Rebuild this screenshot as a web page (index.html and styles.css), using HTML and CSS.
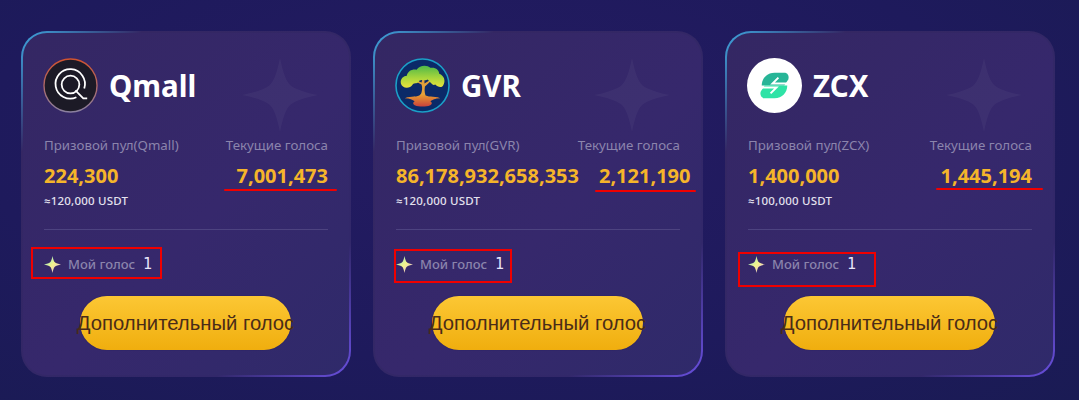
FILE: index.html
```html
<!DOCTYPE html>
<html lang="en">
<head>
  <meta charset="UTF-8">
  <meta name="viewport" content="width=device-width, initial-scale=1.0">
  <title>Голосование</title>
  <link rel="stylesheet" href="styles.css">
</head>
<body>
  <svg class="svg-defs" width="0" height="0">
    <defs>
      <linearGradient id="sparkGrad" x1="0" y1="0" x2="1" y2="1">
        <stop offset="0.1" stop-color="#8fe8d0"/>
        <stop offset="0.5" stop-color="#f4f48a"/>
        <stop offset="0.9" stop-color="#e8b8e0"/>
      </linearGradient>
      <linearGradient id="qRing" x1="0.5" y1="0" x2="0.5" y2="1">
        <stop offset="0" stop-color="#d2532f"/>
        <stop offset="1" stop-color="#8a80a0"/>
      </linearGradient>
      <linearGradient id="treeGrad" x1="0" y1="0" x2="0" y2="1">
        <stop offset="0" stop-color="#4fb848"/>
        <stop offset="0.55" stop-color="#a8d63c"/>
        <stop offset="1" stop-color="#ece23c"/>
      </linearGradient>
      <linearGradient id="rootGrad" x1="0" y1="0" x2="0" y2="1">
        <stop offset="0" stop-color="#e8a030"/>
        <stop offset="1" stop-color="#c8403c"/>
      </linearGradient>
      <path id="star4" d="M50 0 C54 20 58 32 64 37 C70 42 84 47 100 50 C84 53 70 58 64 63 C58 68 54 80 50 100 C46 80 42 68 36 63 C30 58 16 53 0 50 C16 47 30 42 36 37 C42 32 46 20 50 0 Z"/>
    </defs>
  </svg>

  <div class="cards">
    <div class="card card-qmall">
      <svg class="bg-star" viewBox="0 0 100 100" preserveAspectRatio="none"><use href="#star4"/></svg>
      <div class="card-head">
        <svg class="logo" viewBox="0 0 56 56">
          <circle cx="28" cy="28" r="27" fill="#1c1a26" stroke="url(#qRing)" stroke-width="1.4"/>
          <path d="M34 40 A15 15 0 1 1 42 31" fill="none" stroke="#fff" stroke-width="1.8"/>
          <circle cx="28" cy="27" r="9" fill="none" stroke="#fff" stroke-width="1.8"/>
          <path d="M33 33 L41 41 H45" fill="none" stroke="#fff" stroke-width="1.8"/>
        </svg>
        <span class="card-title">Qmall</span>
      </div>
      <div class="row labels"><span>Призовой пул(Qmall)</span><span>Текущие голоса</span></div>
      <div class="row values"><span>224,300</span><span>7,001,473</span></div>
      <div class="usdt">≈120,000 USDT</div>
      <div class="divider"></div>
      <div class="my-vote">
        <svg class="spark" viewBox="0 0 100 100"><use href="#star4" fill="url(#sparkGrad)"/></svg>
        <span class="my-vote-label">Мой голос</span>
        <span class="my-vote-num">1</span>
      </div>
      <button class="vote-btn" type="button"><span>Дополнительный голос</span></button>
      <div class="mark-box"></div>
      <div class="mark-line"></div>
    </div>

    <div class="card card-gvr">
      <svg class="bg-star" viewBox="0 0 100 100" preserveAspectRatio="none"><use href="#star4"/></svg>
      <div class="card-head">
        <svg class="logo" viewBox="0 0 56 56">
          <circle cx="28" cy="28" r="27" fill="#0b2a68" stroke="#1ba0c8" stroke-width="1.6"/>
          <path d="M10 41 C17 38 23 41 26 37 L30 37 C33 41 39 38 46 41 C41 41 38 43 36 44 C38 45 38 47 36 48 C31 50 25 50 20 48 C18 47 18 45 20 44 C18 43 15 41 10 41 Z" fill="url(#rootGrad)"/>
          <path d="M26 38 C28 33 28 30 27 27 L21 24 L22 23 L27 25 L28 21 L30 21 L30 26 L35 23 L36 24 L30.5 29 C30 32 30 34 31 38 Z" fill="#e2a03a"/>
          <g fill="url(#treeGrad)">
            <path d="M6 26 C5 21 9 18 12 18 C13 13 18 11 22 12 C25 7 33 7 36 10 C41 9 45 12 45 16 C50 18 52 23 49 28 C47 31 43 29 41 27 C38 29 36 24 33 22 C31 24 28 21 25 23 C23 27 20 25 18 27 C15 32 7 31 6 26 Z"/>
          </g>
        </svg>
        <span class="card-title">GVR</span>
      </div>
      <div class="row labels"><span>Призовой пул(GVR)</span><span>Текущие голоса</span></div>
      <div class="row values"><span>86,178,932,658,353</span><span>2,121,190</span></div>
      <div class="usdt">≈120,000 USDT</div>
      <div class="divider"></div>
      <div class="my-vote">
        <svg class="spark" viewBox="0 0 100 100"><use href="#star4" fill="url(#sparkGrad)"/></svg>
        <span class="my-vote-label">Мой голос</span>
        <span class="my-vote-num">1</span>
      </div>
      <button class="vote-btn" type="button"><span>Дополнительный голос</span></button>
      <div class="mark-box"></div>
      <div class="mark-line"></div>
    </div>

    <div class="card card-zcx">
      <svg class="bg-star" viewBox="0 0 100 100" preserveAspectRatio="none"><use href="#star4"/></svg>
      <div class="card-head">
        <svg class="logo" viewBox="0 0 56 56">
          <circle cx="28" cy="28" r="28" fill="#fff"/>
          <path d="M28 15 H38 C42 15 43 19 42 22 L38 28 H15 C15 21 20 15 28 15 Z" fill="#27b597"/>
          <path d="M14 28 H41 C41 35 36 41 28 41 H18 C14 41 13 37 14 34 L18 28 Z" fill="#2fe3a6"/>
          <path d="M42 26 H26 L32 20" fill="none" stroke="#fff" stroke-width="2"/>
          <path d="M14 30 H30 L24 36" fill="none" stroke="#fff" stroke-width="2"/>
        </svg>
        <span class="card-title">ZCX</span>
      </div>
      <div class="row labels"><span>Призовой пул(ZCX)</span><span>Текущие голоса</span></div>
      <div class="row values"><span>1,400,000</span><span>1,445,194</span></div>
      <div class="usdt">≈100,000 USDT</div>
      <div class="divider"></div>
      <div class="my-vote">
        <svg class="spark" viewBox="0 0 100 100"><use href="#star4" fill="url(#sparkGrad)"/></svg>
        <span class="my-vote-label">Мой голос</span>
        <span class="my-vote-num">1</span>
      </div>
      <button class="vote-btn" type="button"><span>Дополнительный голос</span></button>
      <div class="mark-box"></div>
      <div class="mark-line"></div>
    </div>
  </div>
</body>
</html>
```

FILE: styles.css
```css
html, body {
  margin: 0;
  padding: 0;
}
body {
  width: 1079px;
  height: 400px;
  overflow: hidden;
  font-family: "Noto Sans", "Roboto", sans-serif;
  background: radial-gradient(ellipse at 45% 35%, #241b62 0%, #1e1a5c 60%, #1a1b54 100%);
}
.svg-defs {
  position: absolute;
}
.cards {
  display: grid;
  grid-template-columns: repeat(3, 330px);
  gap: 22px;
  padding: 31px 0 0 21px;
}
.card {
  position: relative;
  box-sizing: border-box;
  height: 346px;
  padding: 24px 21px 0;
  border: 2px solid transparent;
  border-radius: 26px;
  background:
    linear-gradient(135deg, #342763 0%, #36286c 55%, #2f2a6a 100%) padding-box,
    linear-gradient(135deg, #3fa8e0 0%, #342763 18%, #32286a 80%, #6a50e0 100%) border-box;
}
.bg-star {
  position: absolute;
  top: 25px;
  right: 31px;
  width: 76px;
  height: 74px;
  fill: #fff;
  opacity: 0.035;
}
.card-head {
  display: flex;
  align-items: center;
  gap: 11px;
  height: 56px;
}
.logo {
  width: 55px;
  height: 55px;
  flex: none;
  margin-left: -1px;
}
.card-title {
  font-size: 29.5px;
  font-weight: 700;
  color: #fff;
}
.row {
  display: flex;
  justify-content: space-between;
  white-space: nowrap;
}
.labels {
  margin-top: 23px;
  font-size: 13.3px;
  line-height: 18px;
  color: #8b84ac;
}
.values {
  margin-top: 10px;
  gap: 20px;
  font-size: 20px;
  line-height: 24px;
  font-weight: 700;
  color: #f5b52a;
}
.usdt {
  margin-top: 5px;
  font-size: 11.5px;
  font-weight: 500;
  letter-spacing: 0.2px;
  line-height: 16px;
  color: #e4e2ee;
}
.divider {
  height: 1px;
  margin-top: 20px;
  background: #4d4380;
}
.my-vote {
  display: flex;
  align-items: center;
  height: 18px;
  margin-top: 25px;
}
.spark {
  width: 17px;
  height: 17px;
  flex: none;
}
.my-vote-label {
  margin-left: 7px;
  font-size: 13px;
  font-weight: 500;
  color: #8b84ac;
}
.my-vote-num {
  margin-left: 8px;
  font-family: "DejaVu Sans Mono", monospace;
  font-size: 15px;
  color: #e8e4f8;
}
.vote-btn {
  display: flex;
  justify-content: center;
  align-items: center;
  width: 211px;
  height: 54px;
  margin: 23px 0 0 36px;
  padding: 0;
  border: none;
  border-radius: 27px;
  background: linear-gradient(180deg, #fcc734 0%, #f0ae0e 100%);
  box-shadow: 0 0 1px #1c1a56;
  font-family: "Liberation Sans", Arial, sans-serif;
  font-size: 20.3px;
  color: #4a2c18;
  white-space: nowrap;
  cursor: pointer;
}

/* red annotations drawn over the screenshot */
.mark-box {
  position: absolute;
  box-sizing: border-box;
  border: 2px solid #f00000;
}
.mark-line {
  position: absolute;
  height: 2px;
  border-radius: 1px;
  background: #f00000;
}
.card-qmall .mark-box { left: 8px; top: 214px; width: 131px; height: 32px; }
.card-gvr .mark-box { left: 19px; top: 216px; width: 118px; height: 34px; }
.card-zcx .mark-box { left: 11px; top: 219px; width: 138px; height: 35px; }
.card-qmall .mark-line { left: 201px; top: 156px; width: 113px; }
.card-gvr .mark-line { left: 220px; top: 157px; width: 101px; }
.card-zcx .mark-line { left: 209px; top: 155px; width: 107px; }
```
